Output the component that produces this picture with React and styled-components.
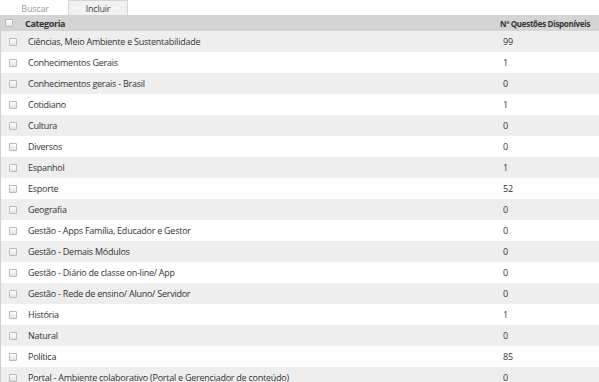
import React from 'react';
import styled, { createGlobalStyle } from 'styled-components';

const GlobalStyle = createGlobalStyle`
    html, body {
        margin: 0;
        padding: 0;
        background: #ffffff;
    }
    body {
        font-family: 'Open Sans', 'Liberation Sans', sans-serif;
        font-size: 9px;
        color: #333333;
    }
`;

const categories = [
    ['Ciências, Meio Ambiente e Sustentabilidade', 99],
    ['Conhecimentos Gerais', 1],
    ['Conhecimentos gerais - Brasil', 0],
    ['Cotidiano', 1],
    ['Cultura', 0],
    ['Diversos', 0],
    ['Espanhol', 1],
    ['Esporte', 52],
    ['Geografia', 0],
    ['Gestão - Apps Família, Educador e Gestor', 0],
    ['Gestão - Demais Módulos', 0],
    ['Gestão - Diário de classe on-line/ App', 0],
    ['Gestão - Rede de ensino/ Aluno/ Servidor', 0],
    ['História', 1],
    ['Natural', 0],
    ['Política', 85],
    ['Portal - Ambiente colaborativo (Portal e Gerenciador de conteúdo)', 0]
];

const Page = styled.div`
    width: 599px;
    height: 382px;
    overflow: hidden;
`;

const Tabs = styled.div`
    display: flex;
    height: 15px;
    gap: 2px;
`;

const Tab = styled.div`
    width: ${props => (props.active ? '60px' : '66px')};
    box-sizing: border-box;
    display: flex;
    align-items: center;
    justify-content: center;
    padding-left: ${props => (props.active ? '0' : '4px')};
    color: ${props => (props.active ? '#444444' : '#9a9a9a')};
    background: ${props => (props.active ? '#f1f1f1' : '#ffffff')};
    border: 1px solid ${props => (props.active ? '#d6d6d6' : 'transparent')};
    border-bottom: none;
    letter-spacing: -0.2px;
`;

const Table = styled.div`
    border-left: 1px solid #d0d0d0;
`;

const Row = styled.div`
    display: grid;
    grid-template-columns: 24px 475px 1fr;
    align-items: center;
    height: ${props => (props.head ? '16px' : '21px')};
    background: ${props =>
        props.head ? '#d4d4d4' : props.odd ? '#eeeeef' : '#ffffff'};
    font-weight: ${props => (props.head ? 700 : 400)};
    letter-spacing: ${props => (props.head ? '-0.35px' : '-0.25px')};
`;

const CheckCell = styled.div`
    display: flex;
    padding-left: ${props => (props.head ? '4px' : '8px')};
`;

const Check = styled.span`
    width: 6px;
    height: 6px;
    border: 1px solid #b9b9b9;
    border-radius: 1px;
    background: linear-gradient(#fdfdfd, #e4e4e4);
`;

const Name = styled.div`
    padding-left: ${props => (props.head ? '0' : '3px')};
    white-space: nowrap;
`;

const Count = styled.div`
    padding-left: ${props => (props.head ? '0' : '3px')};
    font-size: ${props => (props.head ? '8px' : '9px')};
    letter-spacing: ${props => (props.head ? '-0.3px' : '-0.25px')};
    white-space: nowrap;
`;

const App = () => (
    <Page>
        <GlobalStyle />
        <Tabs>
            <Tab>Buscar</Tab>
            <Tab active>Incluir</Tab>
        </Tabs>
        <Table>
            <Row head>
                <CheckCell head>
                    <Check />
                </CheckCell>
                <Name head>Categoria</Name>
                <Count head>Nº Questões Disponíveis</Count>
            </Row>
            {categories.map(([name, count], index) => (
                <Row key={name} odd={index % 2 === 0}>
                    <CheckCell>
                        <Check />
                    </CheckCell>
                    <Name>{name}</Name>
                    <Count>{count}</Count>
                </Row>
            ))}
        </Table>
    </Page>
);

export default App;
